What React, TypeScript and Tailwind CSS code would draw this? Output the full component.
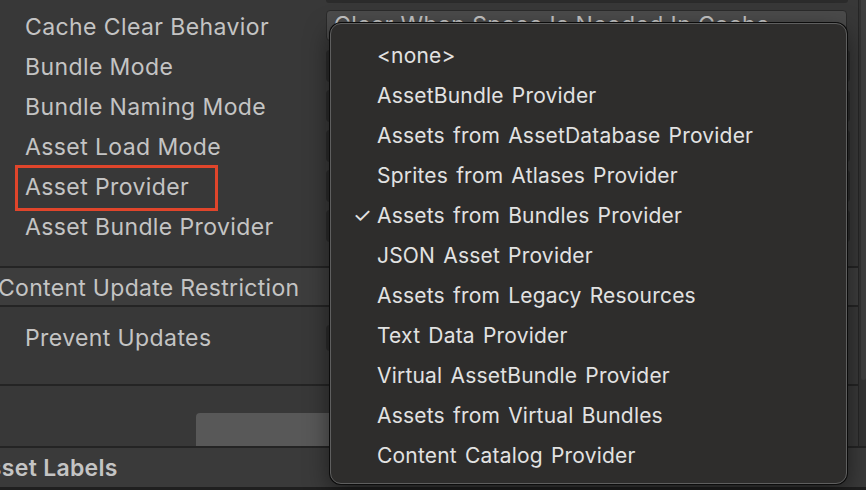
const labels = [
  "Cache Clear Behavior",
  "Bundle Mode",
  "Bundle Naming Mode",
  "Asset Load Mode",
  "Asset Provider",
  "Asset Bundle Provider",
];

const providers = [
  "<none>",
  "AssetBundle Provider",
  "Assets from AssetDatabase Provider",
  "Sprites from Atlases Provider",
  "Assets from Bundles Provider",
  "JSON Asset Provider",
  "Assets from Legacy Resources",
  "Text Data Provider",
  "Virtual AssetBundle Provider",
  "Assets from Virtual Bundles",
  "Content Catalog Provider",
];

const selected = "Assets from Bundles Provider";

export default function App() {
  return (
    <div className="relative h-[490px] w-[866px] overflow-hidden bg-[#383838] font-['Inter',sans-serif] text-[#c4c4c4]">
      <div className="flex h-[446px]">
        {/* INSPECTOR */}
        <div className="flex w-[858px] flex-col">
          <div className="h-[7px]">
            <div className="ml-[326px] h-[3px] w-[522px] rounded-b-[4px] bg-[#2b2b2b]" />
          </div>

          {labels.map((label, i) => (
            <div key={label} className="flex h-[40px]">
              <div className="flex w-[326px] items-center pl-[25px] text-[23px] leading-none tracking-[0.4px]">
                {label}
              </div>
              {i === 0 ? (
                <div className="relative mt-[3px] flex h-[31px] w-[521px] items-center rounded-[4px] border border-[#2a2a2a] bg-[#4b4b4b] pl-[7px] text-[23px] leading-none tracking-[0.4px]">
                  Clear When Space Is Needed In Cache
                  <div className="absolute right-[9px] top-[11px] h-0 w-0 border-x-[7px] border-t-[7px] border-x-transparent border-t-[#c4c4c4]" />
                </div>
              ) : (
                <div className="mt-[3px] h-[32px] w-[524px] rounded-[4px] bg-[#2b2b2b]" />
              )}
            </div>
          ))}

          <div className="h-[19px]" />
          <div className="h-[2px] bg-[#242424]" />
          <div className="flex h-[37px] items-center bg-[#3d3d3d] pt-[4px] text-[23px] leading-none tracking-[0.3px]">
            <span className="-ml-[2px]">Content Update Restriction</span>
          </div>
          <div className="h-[2px] bg-[#242424]" />

          <div className="h-[77px] pt-[11px]">
            <div className="flex h-[40px] items-center">
              <div className="w-[326px] pl-[25px] text-[23px] leading-none tracking-[0.4px]">Prevent Updates</div>
              <div className="h-[26px] w-[26px] rounded-[4px] bg-[#2b2b2b]" />
            </div>
          </div>
          <div className="h-[2px] bg-[#242424]" />

          <div className="h-[60px] pt-[27px]">
            <div className="ml-[196px] h-[33px] w-[640px] rounded-t-[4px] bg-[#585858]" />
          </div>
        </div>

        {/* SCROLLBAR */}
        <div className="w-[8px] border-l border-[#262626] bg-[#333333]">
          <div className="ml-[2px] h-[380px] rounded-b-[3px] bg-[#3f3f3f]" />
        </div>
      </div>

      <div className="h-[2px] bg-[#242424]" />
      <div className="flex h-[39px] items-center bg-[#3a3a3a] pt-[2px] text-[23px] font-semibold leading-none tracking-[0.3px]">
        <span className="-ml-[28px]">Asset Labels</span>
      </div>
      <div className="h-[3px] bg-[#1f1f1f]" />

      {/* ANNOTATION */}
      <div className="absolute left-[15px] top-[165px] h-[46px] w-[203px] border-[3px] border-[#e0452b]" />

      {/* DROPDOWN MENU */}
      <div className="absolute left-[330px] top-[23px] h-[461px] w-[517px] rounded-[11px] border border-[#5f5f5f] bg-[#2e2d2c] pt-[11px] shadow-[0_0_0_1px_#0c0c0c,0_8px_24px_rgba(0,0,0,0.5)]">
        {providers.map((p) => (
          <div
            key={p}
            className="relative flex h-[40px] items-center pl-[46px] text-[21px] leading-none tracking-[0.2px] text-[#e2e2e2] [word-spacing:2px]"
          >
            {p === selected && (
              <span className="absolute left-[22px]">✓</span>
            )}
            {p}
          </div>
        ))}
      </div>
    </div>
  );
}
